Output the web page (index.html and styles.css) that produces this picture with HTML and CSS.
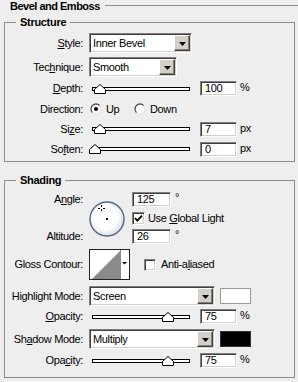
FILE: index.html
```html
<!DOCTYPE html>
<html>
<head>
<meta charset="utf-8">
<title>Bevel and Emboss</title>
<link rel="stylesheet" href="styles.css">
</head>
<body>
<div class="title"><span>Bevel and Emboss</span><i class="rule"></i></div>

<fieldset class="group structure">
  <legend>Structure</legend>

  <div class="row h20">
    <span class="lbl"><u>S</u>tyle:</span>
    <div class="ctrl">
      <div class="select w-style"><span class="val">Inner Bevel</span><span class="btn"><svg width="7" height="4" viewBox="0 0 7 4"><polygon points="0,0 7,0 3.5,4" fill="#000"/></svg></span></div>
    </div>
  </div>

  <div class="row h20 mt4">
    <span class="lbl">Tec<u>h</u>nique:</span>
    <div class="ctrl">
      <div class="select w-tech"><span class="val">Smooth</span><span class="btn"><svg width="7" height="4" viewBox="0 0 7 4"><polygon points="0,0 7,0 3.5,4" fill="#000"/></svg></span></div>
    </div>
  </div>

  <div class="row h17 mt3">
    <span class="lbl"><u>D</u>epth:</span>
    <div class="ctrl">
      <svg class="slider" width="101" height="10" viewBox="0 0 101 10"><rect x="3.5" y="3.5" width="97" height="3" fill="#fff" stroke="#000"/><polygon points="5.5,9.5 16.5,9.5 16.5,5.5 11,0.5 5.5,5.5" fill="#fff" stroke="#000"/></svg>
      <span class="num">100</span><span class="unit">%</span>
    </div>
  </div>

  <div class="row h18 mt3">
    <span class="lbl">Direction:</span>
    <div class="ctrl">
      <span class="opt w-up"><svg width="12" height="12" viewBox="0 0 12 12"><defs><linearGradient id="rg" x1="0" y1="0" x2="1" y2="1"><stop offset="0.45" stop-color="#505050"/><stop offset="0.55" stop-color="#e8e8e8"/></linearGradient></defs><circle cx="6" cy="6" r="5" fill="#fff" stroke="url(#rg)" stroke-width="1.3"/><circle cx="6" cy="6" r="2" fill="#000"/></svg>Up</span>
      <span class="opt"><svg width="12" height="12" viewBox="0 0 12 12"><circle cx="6" cy="6" r="5" fill="#fff" stroke="url(#rg)" stroke-width="1.3"/></svg>Down</span>
    </div>
  </div>

  <div class="row h16 mt3">
    <span class="lbl">Si<u>z</u>e:</span>
    <div class="ctrl">
      <svg class="slider" width="101" height="10" viewBox="0 0 101 10"><rect x="3.5" y="3.5" width="97" height="3" fill="#fff" stroke="#000"/><polygon points="5.5,9.5 16.5,9.5 16.5,5.5 11,0.5 5.5,5.5" fill="#fff" stroke="#000"/></svg>
      <span class="num">7</span><span class="unit">px</span>
    </div>
  </div>

  <div class="row h16 mt4">
    <span class="lbl">So<u>f</u>ten:</span>
    <div class="ctrl">
      <svg class="slider" width="101" height="10" viewBox="0 0 101 10"><rect x="3.5" y="3.5" width="97" height="3" fill="#fff" stroke="#000"/><polygon points="0.5,9.5 11.5,9.5 11.5,5.5 6,0.5 0.5,5.5" fill="#fff" stroke="#000"/></svg>
      <span class="num">0</span><span class="unit">px</span>
    </div>
  </div>
</fieldset>

<fieldset class="group shading">
  <legend>Shading</legend>

  <div class="angle">
    <span class="lbl a1">A<u>n</u>gle:</span>
    <div class="dial">
      <svg width="36" height="36" viewBox="0 0 36 36"><defs><radialGradient id="dg" cx="0.45" cy="0.45" r="0.6"><stop offset="0.6" stop-color="#fdfdfd"/><stop offset="1" stop-color="#d6d6d6"/></radialGradient></defs><circle cx="18" cy="18" r="17" fill="url(#dg)" stroke="#56658f" stroke-width="1.4"/><path d="M12.5 4v2M12.5 8v2M9 7.5h2M14 7.5h2" stroke="#000" stroke-width="1"/><rect x="17" y="17" width="2" height="2" fill="#000"/></svg>
    </div>
    <div class="ctrl a1r"><span class="num w39">125</span><span class="deg">°</span></div>
    <div class="ctrl a2r"><span class="check"><svg width="13" height="13" viewBox="0 0 13 13"><path d="M3 6 L5.3 8.6 L10 3.6" fill="none" stroke="#000" stroke-width="1.8"/></svg></span><span class="ctext">Use <u>G</u>lobal Light</span></div>
    <span class="lbl a3">Altitude:</span>
    <div class="ctrl a3r"><span class="num w39">26</span><span class="deg">°</span></div>
  </div>

  <div class="row h31 mt5">
    <span class="lbl">Gloss Contour:</span>
    <div class="ctrl">
      <svg width="41" height="31" viewBox="0 0 41 31"><rect x="0.5" y="0.5" width="40" height="30" fill="#fff" stroke="#222"/><polygon points="3,30 31,2 31,30" fill="#8a8a8a"/><line x1="31.5" y1="1" x2="31.5" y2="30" stroke="#8a8a8a"/><polygon points="33,13 38,13 35.5,15.5" fill="#000"/></svg>
      <span class="check small"></span><span class="ctext aa">Anti-a<u>l</u>iased</span>
    </div>
  </div>

  <div class="row h20 mt6">
    <span class="lbl">Hi<u>g</u>hlight Mode:</span>
    <div class="ctrl">
      <div class="select w-mode"><span class="val">Screen</span><span class="btn"><svg width="7" height="4" viewBox="0 0 7 4"><polygon points="0,0 7,0 3.5,4" fill="#000"/></svg></span></div>
      <span class="swatch white"></span>
    </div>
  </div>

  <div class="row h17 mt2">
    <span class="lbl"><u>O</u>pacity:</span>
    <div class="ctrl">
      <svg class="slider" width="101" height="10" viewBox="0 0 101 10"><rect x="3.5" y="3.5" width="97" height="3" fill="#fff" stroke="#000"/><polygon points="73.5,9.5 84.5,9.5 84.5,5.5 79,0.5 73.5,5.5" fill="#fff" stroke="#000"/></svg>
      <span class="num">75</span><span class="unit">%</span>
    </div>
  </div>

  <div class="row h20 mt4">
    <span class="lbl">Sh<u>a</u>dow Mode:</span>
    <div class="ctrl">
      <div class="select w-mode"><span class="val">Multiply</span><span class="btn"><svg width="7" height="4" viewBox="0 0 7 4"><polygon points="0,0 7,0 3.5,4" fill="#000"/></svg></span></div>
      <span class="swatch black"></span>
    </div>
  </div>

  <div class="row h17 mt3">
    <span class="lbl">Opa<u>c</u>ity:</span>
    <div class="ctrl">
      <svg class="slider" width="101" height="10" viewBox="0 0 101 10"><rect x="3.5" y="3.5" width="97" height="3" fill="#fff" stroke="#000"/><polygon points="73.5,9.5 84.5,9.5 84.5,5.5 79,0.5 73.5,5.5" fill="#fff" stroke="#000"/></svg>
      <span class="num">75</span><span class="unit">%</span>
    </div>
  </div>
</fieldset>
</body>
</html>
```

FILE: styles.css
```css
* { box-sizing: border-box; }

body {
  margin: 0;
  width: 298px;
  height: 382px;
  overflow: hidden;
  background: #eeeeee;
  color: #000;
  font-family: "Liberation Sans", Arial, sans-serif;
  font-size: 11px;
  letter-spacing: -0.35px;
}

u { text-decoration: underline; text-underline-offset: 1px; }

.title {
  display: flex;
  align-items: flex-start;
  height: 13px;
  line-height: 13px;
  padding-left: 10px;
  font-weight: bold;
  letter-spacing: -0.5px;
}
.title .rule {
  flex: 1;
  height: 1px;
  margin: 5px 0 0 5px;
  background: #8c8c8c;
}

.group {
  margin: 3px 0 0 4px;
  width: 291px;
  min-width: 0;
  border: 1px solid #8c8c8c;
  padding: 4px 0 4px 0;
}
.group legend {
  margin-left: 11px;
  padding: 0 4px;
  line-height: 13px;
  font-weight: bold;
  letter-spacing: -0.3px;
}
.shading { margin-top: 12px; padding-top: 5px; padding-bottom: 8px; }

.row {
  display: grid;
  grid-template-columns: 84px auto;
  align-items: center;
}
.h16 { height: 16px; }
.h17 { height: 17px; }
.h18 { height: 18px; }
.h20 { height: 20px; }
.h31 { height: 31px; }
.mt2 { margin-top: 2px; }
.mt3 { margin-top: 3px; }
.mt4 { margin-top: 4px; }
.mt5 { margin-top: 5px; }
.mt6 { margin-top: 6px; }

.lbl {
  padding-right: 6px;
  text-align: right;
  white-space: nowrap;
  line-height: 13px;
}

.ctrl {
  display: flex;
  align-items: center;
  height: 100%;
}

.select {
  display: flex;
  height: 20px;
  background: #fff;
  border: 1px solid;
  border-color: #808080 #ffffff #ffffff #808080;
  box-shadow: inset 1px 1px 0 #404040, inset -1px -1px 0 #d4d0c8;
  padding: 1px;
}
.w-style { width: 103px; }
.w-tech { width: 88px; }
.w-mode { width: 126px; }
.select .val {
  flex: 1;
  padding-left: 2px;
  line-height: 16px;
  white-space: nowrap;
  overflow: hidden;
}
.select .btn {
  width: 16px;
  height: 16px;
  display: flex;
  align-items: center;
  justify-content: center;
  background: #d4d0c8;
  border: 1px solid;
  border-color: #ffffff #404040 #404040 #ffffff;
  box-shadow: inset -1px -1px 0 #808080;
}
.select .btn svg { display: block; margin-top: 1px; }

.slider { display: block; margin-right: 10px; }

.num {
  display: block;
  width: 37px;
  height: 15px;
  background: #fff;
  border: 1px solid;
  border-color: #808080 #ffffff #ffffff #808080;
  box-shadow: inset 1px 1px 0 #404040, inset -1px -1px 0 #d4d0c8;
  padding-left: 4px;
  line-height: 13px;
}
.num.w39 { width: 39px; }
.unit { margin-left: 3px; line-height: 13px; margin-top: -2px; }
.deg { margin-left: 4px; line-height: 13px; margin-top: -4px; }

.opt {
  display: flex;
  align-items: center;
  gap: 4px;
  line-height: 13px;
}
.opt svg { display: block; margin-left: 1px; }
.w-up { width: 44px; }

.angle {
  display: grid;
  grid-template-columns: 84px 43px 1fr;
  grid-template-rows: 15px 14px 15px;
  row-gap: 4px;
  align-items: center;
}
.angle .a1 { grid-column: 1; grid-row: 1; }
.angle .a3 { grid-column: 1; grid-row: 3; }
.angle .dial { grid-column: 2; grid-row: 1 / 4; align-self: start; padding-top: 9px; }
.angle .dial svg { display: block; }
.angle .a1r { grid-column: 3; grid-row: 1; }
.angle .a2r { grid-column: 3; grid-row: 2; }
.angle .a3r { grid-column: 3; grid-row: 3; }

.check {
  display: block;
  width: 13px;
  height: 13px;
  background: #fff;
  border: 1px solid;
  border-color: #808080 #ffffff #ffffff #808080;
  box-shadow: inset 1px 1px 0 #404040, inset -1px -1px 0 #d4d0c8;
}
.check svg { display: block; margin: -1px; }
.check.small { width: 12px; height: 12px; margin-left: 14px; }
.ctext { margin-left: 3px; line-height: 13px; white-space: nowrap; }
.ctext.aa { margin-left: 5px; }

.swatch {
  display: block;
  width: 31px;
  height: 16px;
  margin-left: 5px;
}
.swatch.white { background: #fff; border: 1px solid #9a9a9a; }
.swatch.black { background: #000; border: 1px solid #333; }
```
